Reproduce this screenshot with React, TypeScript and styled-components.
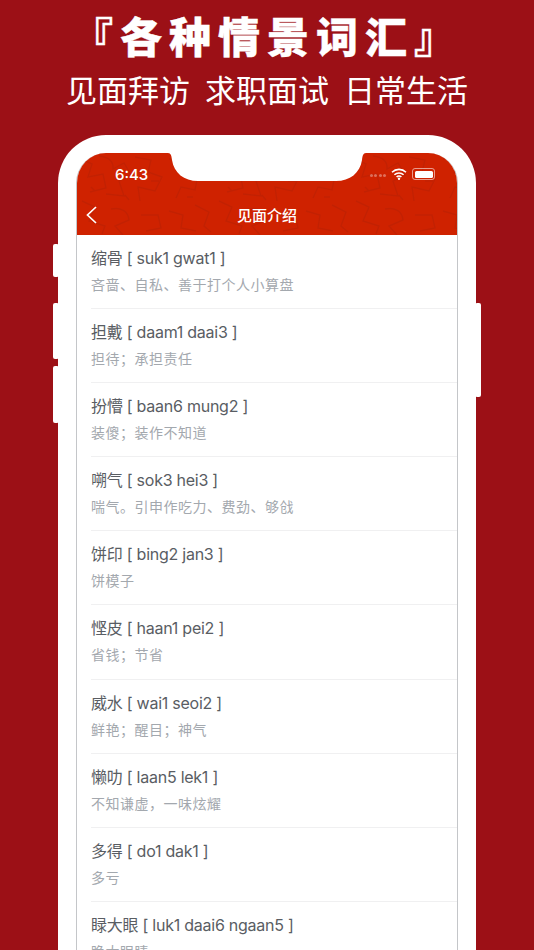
import React from 'react';
import styled, { createGlobalStyle } from 'styled-components';

const entries = [
  { word: '缩骨', sound: 'suk1 gwat1', meaning: '吝啬、自私、善于打个人小算盘' },
  { word: '担戴', sound: 'daam1 daai3', meaning: '担待；承担责任' },
  { word: '扮懵', sound: 'baan6 mung2', meaning: '装傻；装作不知道' },
  { word: '嗍气', sound: 'sok3 hei3', meaning: '喘气。引申作吃力、费劲、够戗' },
  { word: '饼印', sound: 'bing2 jan3', meaning: '饼模子' },
  { word: '悭皮', sound: 'haan1 pei2', meaning: '省钱；节省' },
  { word: '威水', sound: 'wai1 seoi2', meaning: '鲜艳；醒目；神气' },
  { word: '懒叻', sound: 'laan5 lek1', meaning: '不知谦虚，一味炫耀' },
  { word: '多得', sound: 'do1 dak1', meaning: '多亏' },
  { word: '睩大眼', sound: 'luk1 daai6 ngaan5', meaning: '睁大眼睛' },
];

const GlobalStyle = createGlobalStyle`
  html, body {
    margin: 0;
    height: 950px;
    overflow: hidden;
    background: #9c1016;
    font-family: Inter, "Noto Sans CJK SC", sans-serif;
  }
`;

const Page = styled.div`
  width: 534px;
  height: 950px;
  overflow: hidden;
  display: flex;
  flex-direction: column;
  align-items: center;
  background: #9c1016;
`;

const Headline = styled.h1`
  margin: 10px 0 0;
  height: 50px;
  font: 900 42px/50px "Noto Sans CJK SC", sans-serif;
  letter-spacing: 7px;
  color: #fff;
  white-space: nowrap;
  -webkit-text-stroke: 0.4px #fff;
`;

const Tagline = styled.p`
  margin: 6px 0 0;
  height: 46px;
  font: 400 31px/46px "Noto Sans CJK SC", sans-serif;
  word-spacing: 8px;
  color: #fff;
  white-space: nowrap;
`;

const Phone = styled.div`
  position: relative;
  flex: none;
  box-sizing: border-box;
  width: 418px;
  height: 900px;
  margin-top: 23px;
  padding: 18px 18px 0;
  background: #fff;
  border-radius: 48px 48px 0 0;
`;

const SideButton = styled.span<{ $side: 'left' | 'right'; $top: number; $height: number }>`
  position: absolute;
  top: ${(p) => p.$top}px;
  ${(p) => p.$side}: -5px;
  width: 6px;
  height: ${(p) => p.$height}px;
  background: #fff;
  border-radius: 2px;
`;

const Screen = styled.div`
  box-sizing: border-box;
  height: 100%;
  border: solid #c4c6c9;
  border-width: 0 1px;
  border-radius: 30px 30px 0 0;
  overflow: hidden;
  background: #fff;
`;

const Header = styled.header`
  position: relative;
  height: 82px;
  background: #cf2200;
  overflow: hidden;
`;

const Pattern = styled.svg`
  position: absolute;
  inset: 0;
  width: 100%;
  height: 100%;
  filter: blur(0.5px);
`;

const Notch = styled.svg`
  position: absolute;
  top: 0;
  left: 91px;
  width: 198px;
  height: 29px;
`;

const Clock = styled.span`
  position: absolute;
  top: 12px;
  left: 38px;
  font: 500 15px/20px Inter, sans-serif;
  color: #fff;
`;

const StatusIcons = styled.div`
  position: absolute;
  top: 15px;
  right: 22px;
  display: flex;
  align-items: center;
  gap: 5px;
`;

const SignalDots = styled.div`
  display: flex;
  gap: 1.5px;
  margin-top: 3px;
`;

const SignalDot = styled.i`
  width: 3px;
  height: 3px;
  border-radius: 50%;
  background: rgba(255, 255, 255, 0.35);
`;

const Battery = styled.span`
  position: relative;
  box-sizing: border-box;
  width: 23px;
  height: 12px;
  padding: 1.5px;
  border: 1px solid rgba(255, 255, 255, 0.55);
  border-radius: 3px;
  &::before {
    content: '';
    display: block;
    height: 100%;
    background: #fff;
    border-radius: 1.5px;
  }
`;

const BackButton = styled.svg`
  position: absolute;
  left: 8px;
  top: 52px;
  width: 13px;
  height: 20px;
`;

const HeaderTitle = styled.div`
  position: absolute;
  left: 0;
  right: 0;
  top: 51px;
  text-align: center;
  font: 500 15px/22px "Noto Sans CJK SC", sans-serif;
  color: #fff;
`;

const List = styled.ul`
  margin: 0;
  padding: 0 0 0 14px;
  list-style: none;
`;

const Row = styled.li`
  box-sizing: border-box;
  height: 74.1px;
  padding-top: 12px;
  border-bottom: 1px solid #f0f0f1;
`;

const Word = styled.div`
  font: 400 16px/22px Inter, "Noto Sans CJK SC", sans-serif;
  letter-spacing: -0.25px;
  color: #595d63;
  white-space: nowrap;
`;

const Meaning = styled.div`
  margin-top: 5px;
  font: 400 14px/20px "Noto Sans CJK SC", sans-serif;
  letter-spacing: 0.5px;
  color: #a3a8ae;
  white-space: nowrap;
`;

const App = () => (
  <Page>
    <GlobalStyle />
    <Headline>『各种情景词汇』</Headline>
    <Tagline>见面拜访 求职面试 日常生活</Tagline>
    <Phone>
      <SideButton $side="left" $top={109} $height={33} />
      <SideButton $side="left" $top={168} $height={56} />
      <SideButton $side="left" $top={231} $height={57} />
      <SideButton $side="right" $top={168} $height={94} />
      <Screen>
        <Header>
          <Pattern aria-hidden="true">
            <defs>
              <pattern id="maze" width="137" height="83" patternUnits="userSpaceOnUse">
                <path
                  d="M3 6l12 5-4 13 15-3 3 14-16 4M22 3c9 1 15 5 14 13l11-6 7 12-12 6 5 15-18-2M58 4l16 3-3 12 14 5-7 14-17-4 2 14M92 6h15l-4 14 18 2-3 15-14-3-5 11M122 4l10 9-6 8M5 48l13 6-6 14 16 5-3 8M34 56c10-2 17 2 18 11l-14 6 8 9M64 62h17l3 13-15 3M92 58l14 4-2 13 15 3M118 52l14 7-5 14 7 6M74 28h8M110 44h6M48 42l4 5M14 34l4 4"
                  fill="none"
                  stroke="#b61f04"
                  strokeWidth="1.4"
                  opacity="0.5"
                />
              </pattern>
            </defs>
            <rect width="100%" height="100%" fill="url(#maze)" />
          </Pattern>
          <Notch viewBox="0 0 198 29" aria-hidden="true">
            <path d="M0 0C3 0 3.500 3 4 7C6 20 16 28 30 28H168C182 28 192 20 194 7C194.500 3 195 0 198 0Z" fill="#fff" />
          </Notch>
          <Clock>6:43</Clock>
          <StatusIcons>
            <SignalDots>
              <SignalDot />
              <SignalDot />
              <SignalDot />
              <SignalDot />
            </SignalDots>
            <svg width="16" height="12" viewBox="0 0 16 12" aria-hidden="true">
              <path d="M1 4.200A10 10 0 0 1 15 4.200M3.400 6.800A6.600 6.600 0 0 1 12.600 6.800M5.600 9A3.400 3.400 0 0 1 10.400 9" fill="none" stroke="#fff" strokeWidth="1.6" />
              <circle cx="8" cy="10.800" r="1.200" fill="#fff" />
            </svg>
            <Battery />
          </StatusIcons>
          <BackButton viewBox="0 0 13 20" aria-hidden="true">
            <path d="M11 2L2.500 10L11 18" fill="none" stroke="#fff" strokeWidth="1.7" />
          </BackButton>
          <HeaderTitle>见面介绍</HeaderTitle>
        </Header>
        <List>
          {entries.map((entry) => (
            <Row key={entry.word}>
              <Word>
                {entry.word} [ {entry.sound} ]
              </Word>
              <Meaning>{entry.meaning}</Meaning>
            </Row>
          ))}
        </List>
      </Screen>
    </Phone>
  </Page>
);

export default App;
